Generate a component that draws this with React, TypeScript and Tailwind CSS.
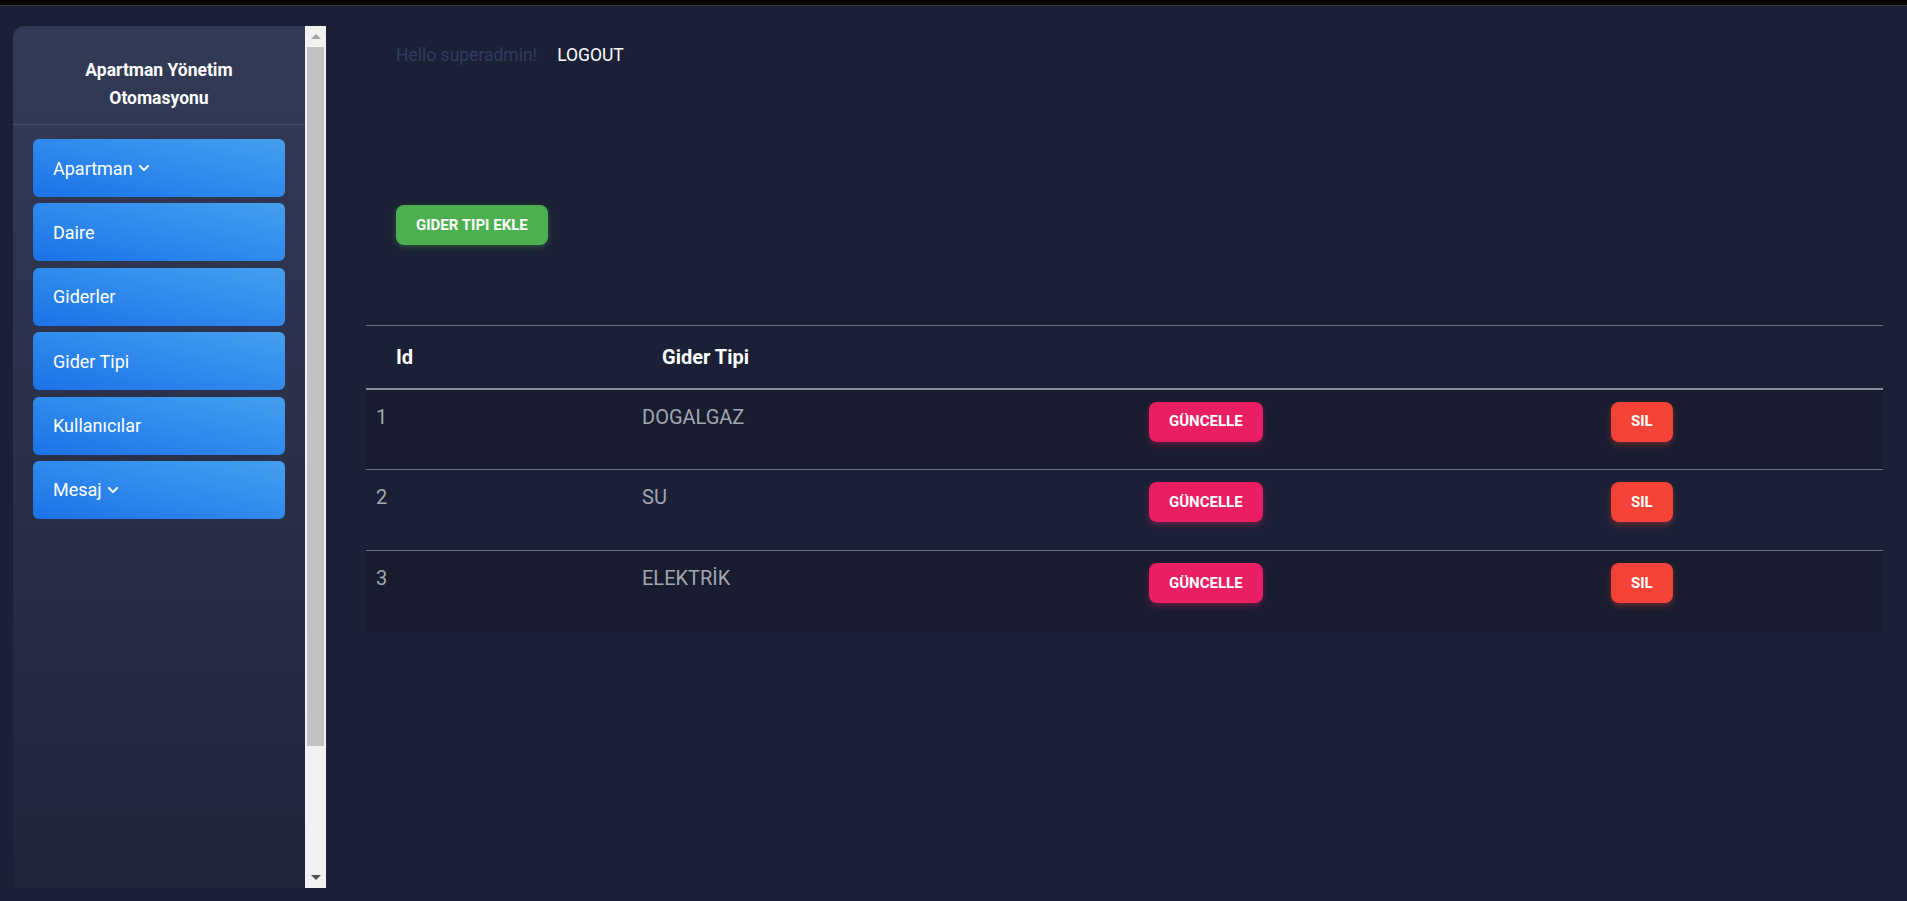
import React from "react";
import { FaChevronDown } from "react-icons/fa";

interface MenuItem {
  label: string;
  dropdown?: boolean;
}

const menu: MenuItem[] = [
  { label: "Apartman", dropdown: true },
  { label: "Daire" },
  { label: "Giderler" },
  { label: "Gider Tipi" },
  { label: "Kullanıcılar" },
  { label: "Mesaj", dropdown: true },
];

const rows = [
  { id: 1, name: "DOGALGAZ" },
  { id: 2, name: "SU" },
  { id: 3, name: "ELEKTRİK" },
];

const Sidebar: React.FunctionComponent = () => {
  return (
    <div className="flex h-[862px] shrink-0">
      <div className="w-[292px] h-full rounded-tl-[12px] bg-gradient-to-b from-[#333a56] via-[#2a3048] to-[#1f2439]">
        <div className="pt-[30px] pb-[12px] border-b border-[#4a5170] text-center text-white font-bold text-[17.5px] leading-[28px]">
          <div>Apartman Yönetim</div>
          <div>Otomasyonu</div>
        </div>
        <div className="flex flex-col gap-[6.4px] px-[20px] mt-[14px]">
          {menu.map((m) => (
            <div
              key={m.label}
              className="h-[58px] rounded-[6px] bg-gradient-to-tr from-[#1c72e8] to-[#45a0f0] flex items-center pl-[20px] text-white text-[18px]"
            >
              {m.label}
              {m.dropdown && <FaChevronDown className="ml-[5px] text-[12px]" />}
            </div>
          ))}
        </div>
      </div>
      {/* scrollbar */}
      <div className="w-[21px] h-full bg-[#f1f1f1] flex flex-col items-center">
        <div className="h-[21px] flex items-center justify-center">
          <div className="w-0 h-0 border-l-[5px] border-r-[5px] border-b-[5px] border-l-transparent border-r-transparent border-b-[#a3a3a3]" />
        </div>
        <div className="w-[17px] h-[699px] bg-[#c1c1c1]" />
        <div className="flex-1" />
        <div className="h-[21px] flex items-center justify-center">
          <div className="w-0 h-0 border-l-[5px] border-r-[5px] border-t-[5px] border-l-transparent border-r-transparent border-t-[#505050]" />
        </div>
      </div>
    </div>
  );
};

const App: React.FunctionComponent = () => {
  return (
    <div className="w-full h-[901px] bg-[#1c2036] font-['Roboto',sans-serif] overflow-hidden">
      <div className="h-[6px] bg-[#080808] border-b border-[#3a3a3a]" />
      <div className="flex pl-[13px] pt-[20px]">
        <Sidebar />
        <div className="flex-1 pl-[40px] pr-[24px]">
          <div className="pl-[30px] pt-[29px] flex items-center text-[17.5px] h-[20px]">
            <span className="text-[#2f3d5e]">Hello superadmin!</span>
            <span className="text-white ml-[20px]">LOGOUT</span>
          </div>
          <div className="pl-[30px] mt-[150px]">
            <button className="h-[40px] px-[20px] rounded-[8px] bg-[#4caf50] text-white font-bold text-[15px] shadow-[0_2px_6px_rgba(76,175,80,0.35)]">
              GIDER TIPI EKLE
            </button>
          </div>
          <table className="mt-[80px] w-full table-fixed border-t border-[#6b6f80] border-collapse">
            <colgroup>
              <col className="w-[266px]" />
              <col className="w-[507px]" />
              <col className="w-[462px]" />
              <col />
            </colgroup>
            <thead>
              <tr className="h-[63px] border-b-2 border-[#8a8d99]">
                <th className="text-left pl-[30px] text-white font-bold text-[20px]">Id</th>
                <th className="text-left pl-[30px] text-white font-bold text-[20px]">Gider Tipi</th>
                <th />
                <th />
              </tr>
            </thead>
            <tbody>
              {rows.map((r, i) => (
                <tr
                  key={r.id}
                  className={`h-[81px] align-top ${i % 2 === 0 ? "bg-[#191c2f]" : "bg-[#1c2036]"} ${i < 2 ? "border-b border-[#6b6f80]" : ""}`}
                >
                  <td className="pl-[10px] pt-[13px] text-[#a2a6b0] text-[20px] leading-[28px]">{r.id}</td>
                  <td className="pl-[10px] pt-[13px] text-[#a2a6b0] text-[20px] leading-[28px]">{r.name}</td>
                  <td className="pl-[10px] pt-[12px]">
                    <button className="h-[40px] px-[20px] rounded-[8px] bg-[#e91e63] text-white font-bold text-[15px] shadow-[0_3px_6px_rgba(233,30,99,0.35)]">
                      GÜNCELLE
                    </button>
                  </td>
                  <td className="pl-[10px] pt-[12px]">
                    <button className="h-[40px] px-[20px] rounded-[8px] bg-[#f44336] text-white font-bold text-[15px] shadow-[0_3px_6px_rgba(244,67,54,0.35)]">
                      SIL
                    </button>
                  </td>
                </tr>
              ))}
            </tbody>
          </table>
        </div>
      </div>
    </div>
  );
};

export default App;
